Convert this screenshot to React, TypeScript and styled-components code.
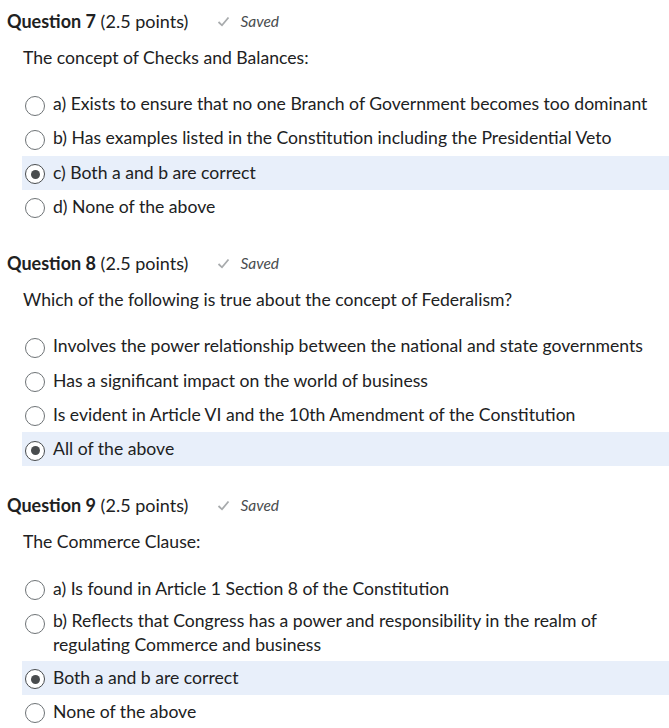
import React from "react";
import styled, { createGlobalStyle } from "styled-components";

const GlobalStyle = createGlobalStyle`
  body {
    margin: 0;
    background: #ffffff;
    font-family: Lato, "Noto Sans", sans-serif;
    color: #202122;
  }
`;

type Option = { label: string; checked?: boolean };
type QuestionData = { number: number; points: string; prompt: string; options: Option[] };

const questions: QuestionData[] = [
  {
    number: 7,
    points: "2.5 points",
    prompt: "The concept of Checks and Balances:",
    options: [
      { label: "a) Exists to ensure that no one Branch of Government becomes too dominant" },
      { label: "b) Has examples listed in the Constitution including the Presidential Veto" },
      { label: "c) Both a and b are correct", checked: true },
      { label: "d) None of the above" },
    ],
  },
  {
    number: 8,
    points: "2.5 points",
    prompt: "Which of the following is true about the concept of Federalism?",
    options: [
      { label: "Involves the power relationship between the national and state governments" },
      { label: "Has a significant impact on the world of business" },
      { label: "Is evident in Article VI and the 10th Amendment of the Constitution" },
      { label: "All of the above", checked: true },
    ],
  },
  {
    number: 9,
    points: "2.5 points",
    prompt: "The Commerce Clause:",
    options: [
      { label: "a) Is found in Article 1 Section 8 of the Constitution" },
      {
        label:
          "b) Reflects that Congress has a power and responsibility in the realm of regulating Commerce and business",
      },
      { label: "Both a and b are correct", checked: true },
      { label: "None of the above" },
    ],
  },
];

const Page = styled.main`
  display: flex;
  flex-direction: column;
  gap: 27px;
  padding-top: 9px;
`;

const Question = styled.section`
  display: flex;
  flex-direction: column;
`;

const Header = styled.div`
  display: flex;
  align-items: center;
  padding-left: 7px;
  height: 24px;
  line-height: 24px;
`;

const Title = styled.h2`
  margin: 0;
  font-size: 18px;
  font-weight: 400;
`;

const Num = styled.strong`
  font-weight: 700;
`;

const Saved = styled.span`
  display: flex;
  align-items: center;
  gap: 10px;
  margin-left: 29px;
  font-size: 15.5px;
  font-style: italic;
  color: #494c4e;
`;

const Prompt = styled.p`
  margin: 13px 0 0 23px;
  font-size: 17.6px;
  line-height: 24px;
`;

const Options = styled.div`
  display: flex;
  flex-direction: column;
  margin-top: 17px;
`;

const Row = styled.label<{ $checked?: boolean }>`
  display: flex;
  gap: 8px;
  box-sizing: border-box;
  min-height: 34.3px;
  margin-left: 22px;
  padding: 3.5px 16px 3.5px 3px;
  background: ${(p) => (p.$checked ? "#e8effa" : "transparent")};
  font-size: 17.6px;
  line-height: 24px;
`;

const Label = styled.span`
  align-self: center;
`;

const Radio = styled.span<{ $checked?: boolean }>`
  flex: none;
  align-self: flex-start;
  box-sizing: border-box;
  width: 20px;
  height: 20px;
  margin-top: 5px;
  border-radius: 50%;
  border: 1px solid ${(p) => (p.$checked ? "#494c4e" : "#6e7376")};
  background: #fff;
  display: flex;
  align-items: center;
  justify-content: center;

  &::after {
    content: "";
    width: 9px;
    height: 9px;
    border-radius: 50%;
    background: ${(p) => (p.$checked ? "#494c4e" : "transparent")};
  }
`;

const Check = () => (
  <svg width="13" height="11" viewBox="0 0 13 11" aria-hidden="true">
    <path d="M1.5 6 L5 9.3 L11.5 1.5" fill="none" stroke="#a8abad" strokeWidth="1.8" />
  </svg>
);

const QuestionBlock: React.FC<{ q: QuestionData }> = ({ q }) => (
  <Question>
    <Header>
      <Title>
        <Num>Question {q.number}</Num> ({q.points})
      </Title>
      <Saved>
        <Check />
        Saved
      </Saved>
    </Header>
    <Prompt>{q.prompt}</Prompt>
    <Options>
      {q.options.map((o) => (
        <Row key={o.label} $checked={o.checked}>
          <Radio $checked={o.checked} />
          <Label>{o.label}</Label>
        </Row>
      ))}
    </Options>
  </Question>
);

export default function App() {
  return (
    <>
      <GlobalStyle />
      <Page>
        {questions.map((q) => (
          <QuestionBlock key={q.number} q={q} />
        ))}
      </Page>
    </>
  );
}
